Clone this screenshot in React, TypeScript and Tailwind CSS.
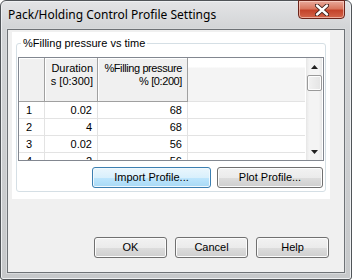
import React from "react";

const F = { fontFamily: '"Liberation Sans", Arial, sans-serif' };

function Btn({ label, w, hot }: { label: string; w: string; hot?: boolean }) {
  return (
    <div
      className={
        "h-[21px] rounded-[3px] border flex items-center justify-center text-[11px] text-black " +
        w +
        " " +
        (hot
          ? "border-[#3c7fb1] bg-[linear-gradient(to_bottom,#eaf6fd_0%,#d9f0fc_50%,#bee6fd_51%,#a7d9f5_100%)] shadow-[inset_0_0_0_1px_#f0f9fe]"
          : "border-[#707070] bg-[linear-gradient(to_bottom,#f2f2f2_0%,#ebebeb_50%,#dddddd_51%,#cfcfcf_100%)] shadow-[inset_0_0_0_1px_#fcfcfc]")
      }
    >
      {label}
    </div>
  );
}

const rows = [
  ["1", "0.02", "68"],
  ["2", "4", "68"],
  ["3", "0.02", "56"],
  ["4", "2", "56"],
];

export default function App() {
  return (
    <div className="w-[352px] h-[280px] bg-white" style={F}>
      <div className="w-[352px] h-[280px] rounded-t-[6px] rounded-b-[3px] border border-[#505458] bg-[linear-gradient(to_bottom,#e3e4e6_0px,#d2d4d6_28px,#c6c8ca_100%)] flex flex-col shadow-[inset_0_0_0_1px_#eef0f2]">
        {/* title bar */}
        <div className="h-[28px] flex items-start justify-between">
          <div
            className="pl-[7px] pt-[6px] text-[12px] text-black leading-[16px]"
            style={{ fontFamily: '"Noto Sans", "Open Sans", sans-serif' }}
          >
            Pack/Holding Control Profile Settings
          </div>
          <div className="mr-[6px] mt-[-1px] w-[47px] h-[19px] rounded-b-[4px] border border-[#6b241a] bg-[linear-gradient(to_bottom,#e9a99b_0%,#d9775f_45%,#c4432a_55%,#d3654a_100%)] shadow-[inset_0_0_0_1px_rgba(255,220,210,0.6)] flex items-center justify-center">
            <svg width="14" height="12" viewBox="0 0 14 12">
              <path
                d="M2 1.5 L12 10.5 M12 1.5 L2 10.5"
                stroke="#3b1c17"
                strokeWidth="4.2"
                strokeLinecap="round"
              />
              <path
                d="M2 1.5 L12 10.5 M12 1.5 L2 10.5"
                stroke="#ffffff"
                strokeWidth="2.4"
                strokeLinecap="round"
              />
            </svg>
          </div>
        </div>
        {/* client */}
        <div className="mx-[6px] mb-[6px] flex-1 border border-[#6e7276] bg-[#f0f0f0] flex flex-col shadow-[0_0_0_1px_#d8dadc]">
          <div className="ml-[4px] mt-[2px] w-[318px] h-[167px] bg-white flex flex-col">
            <div className="relative ml-[4px] mt-[11px] w-[310px] h-[149px] rounded-[3px] border border-[#d5dfe5] flex flex-col">
              <div className="absolute left-[4px] top-[-8px] bg-white px-[2px] text-[11px] leading-[14px] text-black">
                %Filling pressure vs time
              </div>
              {/* grid */}
              <div className="mt-[13px] ml-[1px] w-[306px] h-[104px] border border-[#828790] flex overflow-hidden">
                <div className="flex-1 flex flex-col overflow-hidden">
                  <div className="h-[44px] flex shrink-0">
                    <div className="w-[26px] h-[44px] bg-[#f0f0f0] border-r border-b border-[#a0a0a0] shadow-[inset_1px_1px_0_#ffffff]" />
                    <div className="w-[53px] h-[44px] bg-[#f0f0f0] border-r border-b border-[#a0a0a0] shadow-[inset_1px_1px_0_#ffffff] text-[11px] leading-[13px] text-right pr-[4px] pt-[4px] overflow-hidden whitespace-nowrap">
                      <div>Duration</div>
                      <div>s [0:300]</div>
                    </div>
                    <div className="w-[90px] h-[44px] bg-[#f0f0f0] border-r border-b border-[#a0a0a0] shadow-[inset_1px_1px_0_#ffffff] text-[11px] leading-[13px] text-right pr-[5px] pt-[4px] overflow-hidden whitespace-nowrap tracking-[-0.4px]">
                      <div>%Filling pressure</div>
                      <div>% [0:200]</div>
                    </div>
                    <div className="flex-1 h-[44px] bg-[linear-gradient(to_bottom,#ffffff_0px,#ffffff_9px,#f4f4f4_10px,#f4f4f4_100%)] border-b border-[#e3e3e3]" />
                  </div>
                  {rows.map((r) => (
                    <div key={r[0]} className="h-[17px] flex shrink-0 text-[11px] leading-[16px] text-black">
                      <div className="w-[26px] border-r border-b border-[#e3e3e3] pl-[7px]">{r[0]}</div>
                      <div className="w-[53px] border-r border-b border-[#e3e3e3] text-right pr-[5px]">{r[1]}</div>
                      <div className="w-[90px] border-r border-b border-[#e3e3e3] text-right pr-[5px]">{r[2]}</div>
                      <div className="flex-1 border-b border-[#e3e3e3]" />
                    </div>
                  ))}
                </div>
                {/* scrollbar */}
                <div className="w-[16px] ml-[1px] mr-[1px] h-full bg-[linear-gradient(to_right,#e6e6e6_0%,#f4f4f4_20%,#f4f4f4_80%,#e6e6e6_100%)] flex flex-col items-center">
                  <div className="h-[17px] w-full flex items-center justify-center">
                    <svg width="7" height="4" viewBox="0 0 7 4">
                      <path d="M3.5 0 L7 4 L0 4 Z" fill="#222" />
                    </svg>
                  </div>
                  <div className="w-[15px] h-[16px] rounded-[2px] border border-[#9a9a9a] bg-[linear-gradient(to_right,#f2f2f2,#e4e4e4)] shadow-[inset_0_0_0_1px_#fdfdfd]" />
                  <div className="flex-1" />
                  <div className="h-[17px] w-full flex items-center justify-center">
                    <svg width="7" height="4" viewBox="0 0 7 4">
                      <path d="M0 0 L7 0 L3.5 4 Z" fill="#222" />
                    </svg>
                  </div>
                </div>
              </div>
              <div className="mt-[6px] mr-[2px] flex justify-end gap-[6px]">
                <Btn label="Import Profile..." w="w-[119px]" hot />
                <Btn label="Plot Profile..." w="w-[106px]" />
              </div>
            </div>
          </div>
          <div className="flex-1" />
          <div className="mb-[14px] mr-[15px] flex justify-end gap-[8px]">
            <Btn label="OK" w="w-[73px]" />
            <Btn label="Cancel" w="w-[73px]" />
            <Btn label="Help" w="w-[73px]" />
          </div>
        </div>
      </div>
    </div>
  );
}
